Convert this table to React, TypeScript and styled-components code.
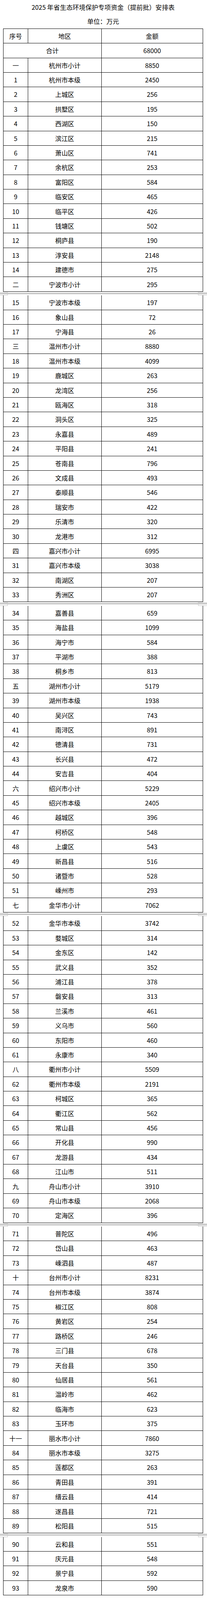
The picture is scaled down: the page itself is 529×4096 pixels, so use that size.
import React from "react";
import styled, { createGlobalStyle } from "styled-components";

const GlobalStyle = createGlobalStyle`
  html, body { margin: 0; padding: 0; background: #fff; }
  body { font-family: "Noto Sans CJK SC", "Noto Sans", sans-serif; color: #000; }
`;

const Page = styled.div`
  width: 529px;
  padding-bottom: 12px;
`;

const Heading = styled.header`
  display: grid;
  grid-template-rows: 36.4px 36.4px;
  align-items: center;
  justify-items: center;
  font-size: 16.3px;
  width: 511px;
  margin-left: 8px;
`;

const Title = styled.h1`
  margin: 0;
  font-size: inherit;
  font-weight: 400;
  line-height: 1;
`;

const Unit = styled.div`
  line-height: 1;
`;

const Segment = styled.section<{ $first?: boolean }>`
  width: 511px;
  margin-left: 8px;
  box-sizing: border-box;
  border-left: 1px solid #000;
  border-right: 1px solid #000;
  border-top: ${(p) => (p.$first ? "1px solid #000" : "none")};
`;

const Row = styled.div`
  display: grid;
  grid-template-columns: 63px 187.5px 1fr;
  height: 37.4px;
  box-sizing: border-box;
  border-bottom: 1px solid #000;
`;

const Cell = styled.div<{ $span?: number; $last?: boolean }>`
  grid-column: span ${(p) => p.$span ?? 1};
  display: flex;
  align-items: center;
  justify-content: center;
  font-size: 16.2px;
  line-height: 1;
  border-right: ${(p) => (p.$last ? "none" : "1px solid #000")};
  white-space: nowrap;
`;

const Break = styled.div`
  display: flex;
  justify-content: space-between;
  height: 9.4px;
  background: linear-gradient(
    to bottom,
    transparent 0,
    transparent 3.4px,
    #a9a9a9 3.4px,
    #a9a9a9 4.4px,
    #e2e2e2 4.4px,
    #e2e2e2 5.4px,
    #a9a9a9 5.4px,
    #a9a9a9 6.4px,
    transparent 6.4px
  );
`;

const Mark = styled.div<{ $side: "left" | "right" }>`
  width: ${(p) => (p.$side === "left" ? "20px" : "23px")};
  box-sizing: border-box;
  margin-top: 1px;
  height: 8.4px;
  border: 1px solid #c4c4c4;
  border-${(p) => p.$side}: none;
`;

type R = [string, string, string];

const segments: R[][] = [
  [
    ["一", "杭州市小计", "8850"],
    ["1", "杭州市本级", "2450"],
    ["2", "上城区", "256"],
    ["3", "拱墅区", "195"],
    ["4", "西湖区", "150"],
    ["5", "滨江区", "215"],
    ["6", "萧山区", "741"],
    ["7", "余杭区", "253"],
    ["8", "富阳区", "584"],
    ["9", "临安区", "465"],
    ["10", "临平区", "426"],
    ["11", "钱塘区", "502"],
    ["12", "桐庐县", "190"],
    ["13", "淳安县", "2148"],
    ["14", "建德市", "275"],
    ["二", "宁波市小计", "295"],
  ],
  [
    ["15", "宁波市本级", "197"],
    ["16", "象山县", "72"],
    ["17", "宁海县", "26"],
    ["三", "温州市小计", "8880"],
    ["18", "温州市本级", "4099"],
    ["19", "鹿城区", "263"],
    ["20", "龙湾区", "256"],
    ["21", "瓯海区", "318"],
    ["22", "洞头区", "325"],
    ["23", "永嘉县", "489"],
    ["24", "平阳县", "241"],
    ["25", "苍南县", "796"],
    ["26", "文成县", "493"],
    ["27", "泰顺县", "546"],
    ["28", "瑞安市", "422"],
    ["29", "乐清市", "320"],
    ["30", "龙港市", "312"],
    ["四", "嘉兴市小计", "6995"],
    ["31", "嘉兴市本级", "3038"],
    ["32", "南湖区", "207"],
    ["33", "秀洲区", "207"],
  ],
  [
    ["34", "嘉善县", "659"],
    ["35", "海盐县", "1099"],
    ["36", "海宁市", "584"],
    ["37", "平湖市", "388"],
    ["38", "桐乡市", "813"],
    ["五", "湖州市小计", "5179"],
    ["39", "湖州市本级", "1938"],
    ["40", "吴兴区", "743"],
    ["41", "南浔区", "891"],
    ["42", "德清县", "731"],
    ["43", "长兴县", "472"],
    ["44", "安吉县", "404"],
    ["六", "绍兴市小计", "5229"],
    ["45", "绍兴市本级", "2405"],
    ["46", "越城区", "396"],
    ["47", "柯桥区", "548"],
    ["48", "上虞区", "543"],
    ["49", "新昌县", "516"],
    ["50", "诸暨市", "528"],
    ["51", "嵊州市", "293"],
    ["七", "金华市小计", "7062"],
  ],
  [
    ["52", "金华市本级", "3742"],
    ["53", "婺城区", "314"],
    ["54", "金东区", "142"],
    ["55", "武义县", "352"],
    ["56", "浦江县", "378"],
    ["57", "磐安县", "313"],
    ["58", "兰溪市", "461"],
    ["59", "义乌市", "560"],
    ["60", "东阳市", "460"],
    ["61", "永康市", "340"],
    ["八", "衢州市小计", "5509"],
    ["62", "衢州市本级", "2191"],
    ["63", "柯城区", "365"],
    ["64", "衢江区", "562"],
    ["65", "常山县", "456"],
    ["66", "开化县", "990"],
    ["67", "龙游县", "434"],
    ["68", "江山市", "511"],
    ["九", "舟山市小计", "3910"],
    ["69", "舟山市本级", "2068"],
    ["70", "定海区", "396"],
  ],
  [
    ["71", "普陀区", "496"],
    ["72", "岱山县", "463"],
    ["73", "嵊泗县", "487"],
    ["十", "台州市小计", "8231"],
    ["74", "台州市本级", "3874"],
    ["75", "椒江区", "808"],
    ["76", "黄岩区", "254"],
    ["77", "路桥区", "246"],
    ["78", "三门县", "678"],
    ["79", "天台县", "350"],
    ["80", "仙居县", "561"],
    ["81", "温岭市", "462"],
    ["82", "临海市", "623"],
    ["83", "玉环市", "375"],
    ["十一", "丽水市小计", "7860"],
    ["84", "丽水市本级", "3275"],
    ["85", "莲都区", "263"],
    ["86", "青田县", "391"],
    ["87", "缙云县", "414"],
    ["88", "遂昌县", "721"],
    ["89", "松阳县", "515"],
  ],
  [
    ["90", "云和县", "551"],
    ["91", "庆元县", "548"],
    ["92", "景宁县", "592"],
    ["93", "龙泉市", "590"],
  ],
];

export default function App() {
  return (
    <Page>
      <GlobalStyle />
      <Heading>
        <Title>2025 年省生态环境保护专项资金（提前批）安排表</Title>
        <Unit>单位：万元</Unit>
      </Heading>
      {segments.map((rows, si) => (
        <React.Fragment key={si}>
          {si > 0 && (
            <Break>
              <Mark $side="left" />
              <Mark $side="right" />
            </Break>
          )}
          <Segment $first={si === 0}>
            {si === 0 && (
              <>
                <Row>
                  <Cell>序号</Cell>
                  <Cell>地区</Cell>
                  <Cell $last>金额</Cell>
                </Row>
                <Row>
                  <Cell $span={2}>合计</Cell>
                  <Cell $last>68000</Cell>
                </Row>
              </>
            )}
            {rows.map(([no, area, amount]) => (
              <Row key={no}>
                <Cell>{no}</Cell>
                <Cell>{area}</Cell>
                <Cell $last>{amount}</Cell>
              </Row>
            ))}
          </Segment>
        </React.Fragment>
      ))}
    </Page>
  );
}
